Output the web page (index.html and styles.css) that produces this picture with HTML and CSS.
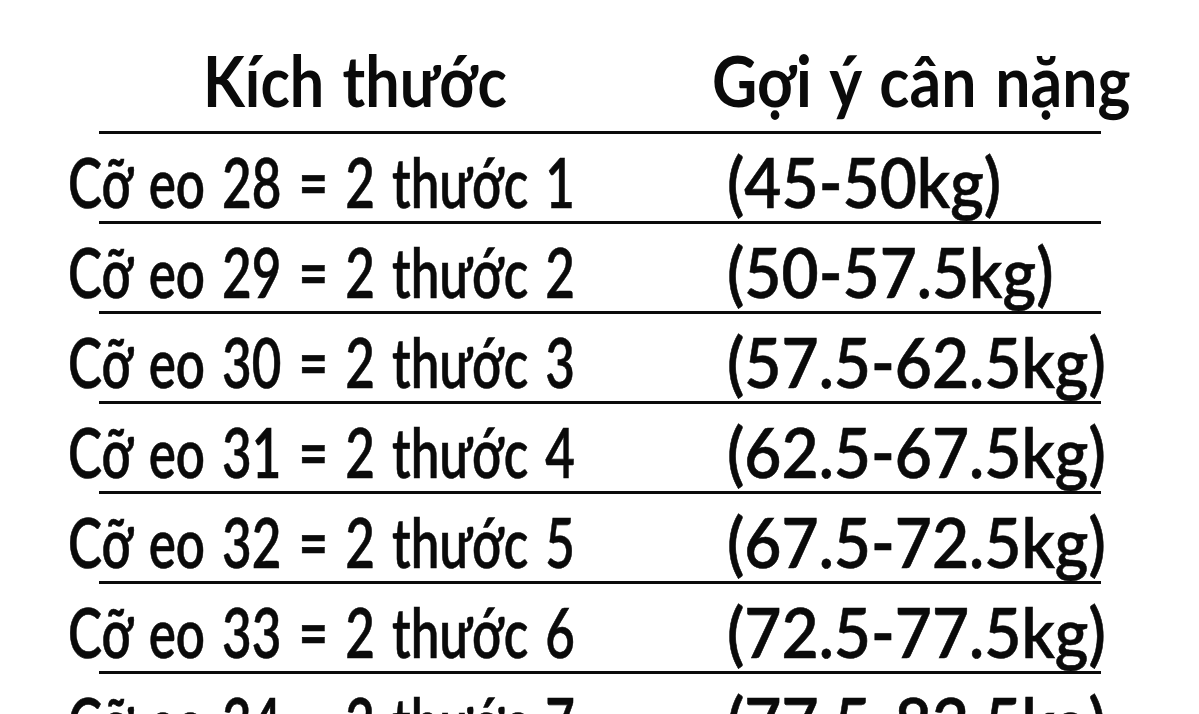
FILE: index.html
```html
<!DOCTYPE html>
<html lang="vi">
<head>
<meta charset="utf-8">
<title>Bảng size</title>
<link rel="stylesheet" href="styles.css">
</head>
<body>
<div class="sheet">
  <div class="head">
    <div class="hcell hcell-size"><span class="txt t-h1">Kích thước</span></div>
    <div class="hcell hcell-weight"><span class="txt t-h2">Gợi ý cân nặng</span></div>
  </div>
  <div class="row"><div class="cell c1"><span class="txt t-c1">Cỡ eo 28 = 2 thước 1</span></div><div class="cell c2"><span class="txt t-c2">(45-50kg)</span></div></div>
  <div class="row"><div class="cell c1"><span class="txt t-c1">Cỡ eo 29 = 2 thước 2</span></div><div class="cell c2"><span class="txt t-c2">(50-57.5kg)</span></div></div>
  <div class="row"><div class="cell c1"><span class="txt t-c1">Cỡ eo 30 = 2 thước 3</span></div><div class="cell c2"><span class="txt t-c2">(57.5-62.5kg)</span></div></div>
  <div class="row"><div class="cell c1"><span class="txt t-c1">Cỡ eo 31 = 2 thước 4</span></div><div class="cell c2"><span class="txt t-c2">(62.5-67.5kg)</span></div></div>
  <div class="row"><div class="cell c1"><span class="txt t-c1">Cỡ eo 32 = 2 thước 5</span></div><div class="cell c2"><span class="txt t-c2">(67.5-72.5kg)</span></div></div>
  <div class="row"><div class="cell c1"><span class="txt t-c1">Cỡ eo 33 = 2 thước 6</span></div><div class="cell c2"><span class="txt t-c2">(72.5-77.5kg)</span></div></div>
  <div class="row"><div class="cell c1"><span class="txt t-c1">Cỡ eo 34 = 2 thước 7</span></div><div class="cell c2"><span class="txt t-c2">(77.5-82.5kg)</span></div></div>
</div>
</body>
</html>
```
FILE: styles.css
```css
html, body {
  margin: 0;
  padding: 0;
  background: #ffffff;
  overflow: hidden;
}
.sheet {
  width: 1199px;
  height: 714px;
  overflow: hidden;
  font-family: Lato, "Open Sans", sans-serif;
  color: #0a0a0a;
}
.head {
  display: grid;
  grid-template-columns: 628px 1fr;
  margin-left: 99px;
  width: 1002px;
  height: 131px;
  align-items: end;
}
.hcell {
  font-size: 70px;
  font-weight: 700;
  line-height: 84px;
  padding-bottom: 9px;
  white-space: nowrap;
  word-spacing: 4px;
}
.hcell-size { padding-left: 104px; }
.hcell-weight { margin-left: -15px; }
.row {
  display: grid;
  grid-template-columns: 628px 1fr;
  margin-left: 99px;
  width: 1002px;
  height: 87px;
  border-top: 3px solid #0a0a0a;
  align-items: start;
}
.cell {
  font-size: 70px;
  font-weight: 600;
  line-height: 79px;
  padding-top: 8px;
  white-space: nowrap;
  -webkit-text-stroke: 0.6px #0a0a0a;
}
.c1 { margin-left: -31px; word-spacing: 6px; }
.txt {
  display: inline-block;
  transform-origin: left center;
}
.t-h1 { transform: scaleX(0.872); }
.t-h2 { transform: scaleX(0.893); }
.t-c1 { transform: scaleX(0.73); }
.t-c2 { transform: scaleX(0.915); }
```
